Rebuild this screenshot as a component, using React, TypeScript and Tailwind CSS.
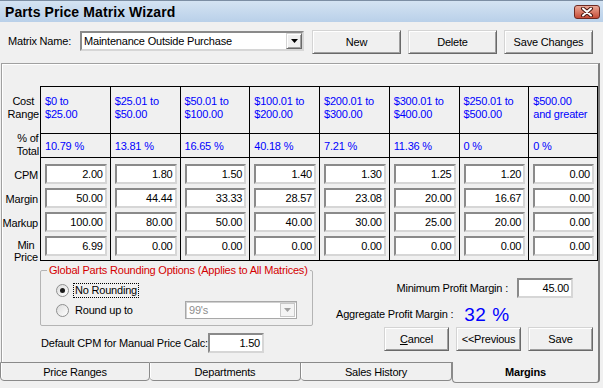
import React from "react";

const columns = [
  { top: "$0 to", bottom: "$25.00", pct: "10.79 %", cpm: "2.00", margin: "50.00", markup: "100.00", min: "6.99" },
  { top: "$25.01 to", bottom: "$50.00", pct: "13.81 %", cpm: "1.80", margin: "44.44", markup: "80.00", min: "0.00" },
  { top: "$50.01 to", bottom: "$100.00", pct: "16.65 %", cpm: "1.50", margin: "33.33", markup: "50.00", min: "0.00" },
  { top: "$100.01 to", bottom: "$200.00", pct: "40.18 %", cpm: "1.40", margin: "28.57", markup: "40.00", min: "0.00" },
  { top: "$200.01 to", bottom: "$300.00", pct: "7.21 %", cpm: "1.30", margin: "23.08", markup: "30.00", min: "0.00" },
  { top: "$300.01 to", bottom: "$400.00", pct: "11.36 %", cpm: "1.25", margin: "20.00", markup: "25.00", min: "0.00" },
  { top: "$250.01 to", bottom: "$500.00", pct: "0 %", cpm: "1.20", margin: "16.67", markup: "20.00", min: "0.00" },
  { top: "$500.00", bottom: "and greater", pct: "0 %", cpm: "0.00", margin: "0.00", markup: "0.00", min: "0.00" },
];

const Field = ({ value, className = "" }: { value: string; className?: string }) => (
  <div
    className={
      "bg-white border-2 border-t-[#8a8a8a] border-l-[#8a8a8a] border-b-[#d6d6d6] border-r-[#d6d6d6] text-right pr-[2px] leading-[16px] " +
      className
    }
  >
    {value}
  </div>
);

const Button = ({ children, className = "" }: { children: React.ReactNode; className?: string }) => (
  <div
    className={
      "flex items-center justify-center bg-[#f0f0f0] border border-t-[#d4d4d4] border-l-[#d4d4d4] border-b-[#696969] border-r-[#696969] shadow-[inset_1px_1px_0_#ffffff,inset_-1px_-1px_0_#a0a0a0] " +
      className
    }
  >
    {children}
  </div>
);

const Arrow = ({ color = "#000000" }: { color?: string }) => (
  <svg width="7" height="4" viewBox="0 0 7 4">
    <polygon points="0,0 7,0 3.5,4" fill={color} />
  </svg>
);

const Radio = ({ checked }: { checked?: boolean }) => (
  <div className="w-[13px] h-[13px] rounded-full border border-[#8e8f8f] bg-gradient-to-br from-[#dcdcdc] to-[#ffffff] flex items-center justify-center">
    {checked && <div className="w-[5px] h-[5px] rounded-full bg-[#1a1a1a]" />}
  </div>
);

export default function App() {
  return (
    <div className="w-[603px] h-[388px] bg-[#f0f0f0] flex flex-col overflow-hidden text-[11px] tracking-[-0.2px] text-black font-['Liberation_Sans',Arial,sans-serif]">
      {/* Title bar */}
      <div className="h-[22px] flex items-center justify-between border-t border-[#7c8ea3] bg-gradient-to-b from-[#d4e3f2] to-[#b9d0e9] pl-[5px] pr-[3px]">
        <span className="text-[14px] font-bold tracking-[0.1px] leading-none">Parts Price Matrix Wizard</span>
        <div className="w-[26px] h-[14px] rounded-[3px] border border-[#6e2a22] bg-gradient-to-b from-[#e9a796] to-[#c64a37] flex items-center justify-center">
          <svg width="14" height="10" viewBox="0 0 14 10">
            <path d="M3 1.5 L11 8.5 M11 1.5 L3 8.5" stroke="#4a1710" strokeWidth="4" strokeLinecap="round" />
            <path d="M3 1.5 L11 8.5 M11 1.5 L3 8.5" stroke="#ffffff" strokeWidth="2" strokeLinecap="round" />
          </svg>
        </div>
      </div>

      {/* Matrix name row */}
      <div className="h-[41px] flex items-start pt-[8px] pl-[8px]">
        <div className="w-[72px] h-[22px] flex items-center">Matrix Name:</div>
        <div className="w-[224px] h-[20px] mt-[1px] flex bg-white border-2 border-t-[#8a8a8a] border-l-[#8a8a8a] border-b-[#d6d6d6] border-r-[#d6d6d6]">
          <div className="flex-1 pl-[2px] leading-[16px]">Maintenance Outside Purchase</div>
          <Button className="w-[16px] h-[16px]">
            <Arrow />
          </Button>
        </div>
        <Button className="ml-[8px] w-[89px] h-[24px]">New</Button>
        <Button className="ml-[7px] w-[89px] h-[24px]">Delete</Button>
        <Button className="ml-[7px] w-[89px] h-[24px]">Save Changes</Button>
      </div>

      {/* Main panel */}
      <div className="ml-[1px] w-[599px] h-[299px] border-t border-l border-[#a0a0a0] border-r-2 border-r-[#7f7f7f] shadow-[inset_1px_1px_0_#ffffff] pt-[22px] flex flex-col">
        {/* Matrix grid */}
        <div className="flex">
          <div className="w-[38px] flex flex-col pt-[1px]">
            <div className="h-[47px] pt-[8px] flex justify-end pr-[1px]">
              <div className="text-center leading-[13px]">
                Cost
                <br />
                Range
              </div>
            </div>
            <div className="h-[24px] flex items-center justify-end pr-[1px]">
              <div className="text-center leading-[13px] -mt-[2px]">
                % of
                <br />
                Total
              </div>
            </div>
            <div className="pt-[7px] flex flex-col gap-[4px]">
              <div className="h-[20px] flex items-center justify-end pr-[2px]">CPM</div>
              <div className="h-[20px] flex items-center justify-end pr-[2px]">Margin</div>
              <div className="h-[20px] flex items-center justify-end pr-[2px]">Markup</div>
              <div className="h-[20px] flex items-start justify-end pr-[2px] pt-[2px]">
                <div className="text-center leading-[12px]">
                  Min
                  <br />
                  Price
                </div>
              </div>
            </div>
          </div>
          <div className="w-[558px] grid grid-cols-8 border-t border-black">
            {columns.map((c, i) => (
              <div key={i} className="border-l border-black last:border-r flex flex-col">
                <div className="h-[47px] border-b border-black pt-[8px] pl-[4px] leading-[13px] text-[#0000ff]">
                  {c.top}
                  <br />
                  {c.bottom}
                </div>
                <div className="h-[24px] border-b border-black flex items-center pl-[4px] pt-[2px] text-[#0000ff]">
                  {c.pct}
                </div>
                <div className="border-b border-black pt-[6px] pb-[4px] pl-[4px] pr-[3px] flex flex-col gap-[4px]">
                  <Field value={c.cpm} className="h-[20px]" />
                  <Field value={c.margin} className="h-[20px]" />
                  <Field value={c.markup} className="h-[20px]" />
                  <Field value={c.min} className="h-[20px]" />
                </div>
              </div>
            ))}
          </div>
        </div>

        {/* Lower section */}
        <div className="flex">
          <div className="ml-[38px] w-[273px] flex flex-col">
            <fieldset className="mt-[3px] border border-[#b4b4b4] rounded-[2px] min-w-0">
              <legend className="ml-[6px] px-[2px] leading-[13px] whitespace-nowrap text-[#d40000]">
                Global Parts Rounding Options (Applies to All Matrices)
              </legend>
              <div className="pl-[15px] pr-[15px] pt-[5px] pb-[7px] flex flex-col gap-[4px]">
                <div className="h-[16px] flex items-center">
                  <Radio checked />
                  <span className="ml-[5px] px-[1px] leading-[13px] outline outline-1 outline-dotted outline-black">No Rounding</span>
                </div>
                <div className="h-[16px] flex items-center">
                  <Radio />
                  <span className="ml-[6px]">Round up to</span>
                  <div className="ml-auto w-[112px] h-[18px] flex bg-white border border-[#a8a8a8] shadow-[inset_1px_1px_0_#d0d0d0]">
                    <div className="flex-1 pl-[3px] leading-[16px] text-[#8d8d8d]">99's</div>
                    <div className="w-[15px] h-[14px] mt-[1px] mr-[1px] flex items-center justify-center bg-[#f4f4f4] border border-[#c8c8c8]">
                      <Arrow color="#a0a0a0" />
                    </div>
                  </div>
                </div>
              </div>
            </fieldset>
            <div className="mt-[7px] flex items-center">
              <span className="pl-[1px] w-[168px] whitespace-nowrap">Default CPM for Manual Price Calc:</span>
              <Field value="1.50" className="w-[56px] h-[20px]" />
            </div>
          </div>

          <div className="flex-1 flex flex-col">
            <div className="mt-[17px] h-[20px] flex items-center justify-end pr-[25px]">
              <span className="mr-[9px]">Minimum Profit Margin :</span>
              <Field value="45.00" className="w-[56px] h-[20px]" />
            </div>
            <div className="mt-[6px] h-[20px] flex items-center pl-[23px]">
              <span>Aggregate Profit Margin :</span>
              <span className="ml-[11px] text-[19px] leading-none tracking-[0.5px] text-[#0000ff]">32 %</span>
            </div>
            <div className="mt-[3px] flex justify-end pr-[5px] gap-[7px]">
              <Button className="w-[65px] h-[24px]">
                <span>
                  <span className="underline">C</span>ancel
                </span>
              </Button>
              <Button className="w-[65px] h-[24px]">&lt;&lt;Previous</Button>
              <Button className="w-[65px] h-[24px]">Save</Button>
            </div>
          </div>
        </div>
      </div>

      {/* Tabs */}
      <div className="flex h-[21px] items-start">
        <div className="w-[150px] h-[19px] border border-[#8a8a8a] rounded-b-[4px] shadow-[inset_1px_0_0_#ffffff] flex items-center justify-center pt-[2px]">
          Price Ranges
        </div>
        <div className="w-[151px] h-[19px] border border-l-0 border-[#8a8a8a] rounded-b-[4px] shadow-[inset_1px_0_0_#ffffff] flex items-center justify-center pt-[2px]">
          Departments
        </div>
        <div className="w-[151px] h-[19px] border border-l-0 border-[#8a8a8a] rounded-b-[4px] shadow-[inset_1px_0_0_#ffffff] flex items-center justify-center pt-[2px]">
          Sales History
        </div>
        <div className="w-[148px] h-[21px] border-l border-b border-r-2 border-[#8a8a8a] border-r-[#7f7f7f] rounded-b-[4px] flex items-center justify-center font-bold pt-[1px]">
          Margins
        </div>
      </div>
    </div>
  );
}
